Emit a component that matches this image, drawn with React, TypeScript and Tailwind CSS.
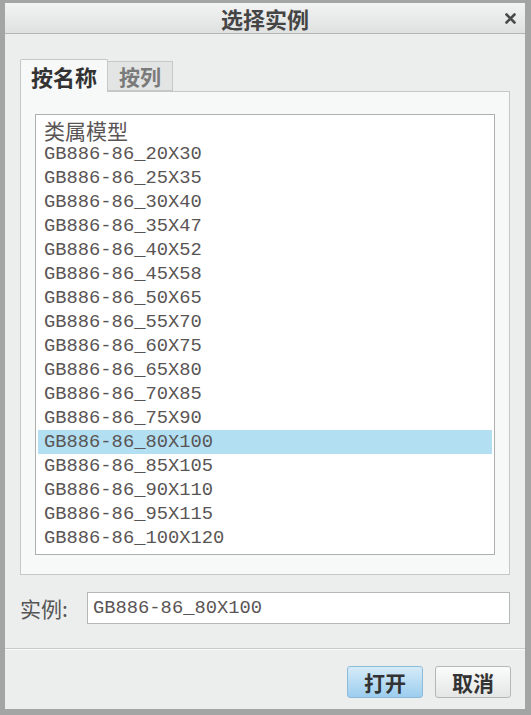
const items = [
  '类属模型',
  'GB886-86_20X30',
  'GB886-86_25X35',
  'GB886-86_30X40',
  'GB886-86_35X47',
  'GB886-86_40X52',
  'GB886-86_45X58',
  'GB886-86_50X65',
  'GB886-86_55X70',
  'GB886-86_60X75',
  'GB886-86_65X80',
  'GB886-86_70X85',
  'GB886-86_75X90',
  'GB886-86_80X100',
  'GB886-86_85X105',
  'GB886-86_90X110',
  'GB886-86_95X115',
  'GB886-86_100X120',
]

const selected = 'GB886-86_80X100'

const cjk = 'font-["Noto_Sans_CJK_SC",sans-serif]'
const mono = 'font-["Liberation_Mono","Noto_Sans_CJK_SC",monospace]'

export default function App() {
  return (
    <div className="w-[531px] h-[715px] flex flex-col bg-[#eceeee] border-t-[3px] border-l-[5px] border-r-[6px] border-b-[6px] border-[#a3a5a5]">
      {/* title bar */}
      <div className="relative h-[31px] shrink-0 flex items-center justify-center bg-gradient-to-b from-[#f3f3f3] to-[#dfe1e1] border-b border-[#b3b5b5]">
        <span className={`${cjk} text-[22px] font-bold text-[#454545] leading-none`}>选择实例</span>
        <svg
          className="absolute right-[9px] top-[10px]"
          width="11"
          height="11"
          viewBox="0 0 11 11"
        >
          <path d="M1.5 1.5 L9.5 9.5 M9.5 1.5 L1.5 9.5" stroke="#4a4a4a" strokeWidth="2.6" strokeLinecap="round" />
        </svg>
      </div>

      <div className="px-[15px] pt-[25px]">
        {/* tabs */}
        <div className="flex items-end h-[32px]">
          <div
            className={`${cjk} relative z-10 -mb-px h-[33px] w-[88px] flex items-center justify-center bg-[#f7f8f8] border border-b-0 border-[#c6c8c8] rounded-t-[2px] text-[22px] font-bold text-[#333] leading-none`}
          >
            按名称
          </div>
          <div
            className={`${cjk} h-[30px] w-[65px] flex items-center justify-center bg-[#e3e5e5] border border-l-0 border-[#c6c8c8] text-[21px] font-bold text-[#7a7a7a] leading-none`}
          >
            按列
          </div>
        </div>

        {/* tab panel */}
        <div className="h-[484px] border border-[#c6c8c8] bg-[#f7f8f8] pt-[22px] px-[14px]">
          <div className="h-[441px] border border-[#aeb0b0] bg-white pt-[3px] px-[2px]">
            {items.map((item) => (
              <div
                key={item}
                className={`h-[24px] pl-[6px] flex items-center text-[#5a5555] ${
                  item === selected ? 'bg-[#b2dff2]' : ''
                }`}
              >
                {item === '类属模型' ? (
                  <span className={`${cjk} text-[21px] leading-none`}>{item}</span>
                ) : (
                  <span className={`${mono} text-[18.8px] leading-none`}>{item}</span>
                )}
              </div>
            ))}
          </div>
        </div>

        {/* instance field */}
        <div className="mt-[17px] flex items-center h-[32px]">
          <span className={`${cjk} w-[67px] text-[21px] text-[#555] leading-none`}>实例:</span>
          <div className="flex-1 h-[32px] flex items-center border border-[#b6b8b8] bg-white pl-[5px]">
            <span className={`${mono} text-[18.8px] text-[#5a5555] leading-none`}>GB886-86_80X100</span>
          </div>
        </div>
      </div>

      <div className="mt-[24px] border-t border-[#c9cbcb]" />

      {/* buttons */}
      <div className="flex justify-end gap-[12px] pt-[16px] pr-[14px] border-t border-[#f8f9f9]">
        <button
          className={`${cjk} w-[76px] h-[32px] rounded-[3px] border border-[#8fbbdb] bg-gradient-to-b from-[#d5ebf8] to-[#9ccdee] text-[21px] font-bold text-[#333] leading-none`}
        >
          打开
        </button>
        <button
          className={`${cjk} w-[76px] h-[32px] rounded-[3px] border border-[#b5b7b7] bg-gradient-to-b from-[#fbfbfb] to-[#e4e6e6] text-[21px] font-bold text-[#333] leading-none`}
        >
          取消
        </button>
      </div>
    </div>
  )
}
